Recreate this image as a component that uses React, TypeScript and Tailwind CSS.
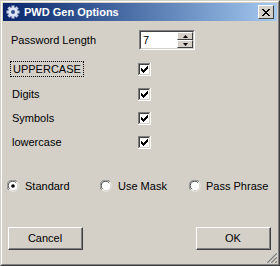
import React from 'react';

const font = { fontFamily: '"Liberation Sans", Arial, sans-serif' };

function Gear() {
  const teeth = [0, 45, 90, 135];
  return (
    <svg width="14" height="14" viewBox="0 0 14 14">
      {teeth.map(a => (
        <rect key={a} x="5.5" y="0.5" width="3" height="13" fill="#c8d0e8" transform={`rotate(${a} 7 7)`} />
      ))}
      <circle cx="7" cy="7" r="4.6" fill="#dfe6f6" />
      <circle cx="7" cy="7" r="2" fill="#3a4f8c" />
    </svg>
  );
}

function CheckBox() {
  return (
    <svg width="13" height="13" viewBox="0 0 13 13" shapeRendering="crispEdges">
      <rect x="0" y="0" width="13" height="13" fill="#ffffff" />
      <rect x="0" y="0" width="12" height="12" fill="#d4d0c8" />
      <rect x="0" y="0" width="12" height="1" fill="#808080" />
      <rect x="0" y="0" width="1" height="12" fill="#808080" />
      <rect x="1" y="1" width="10" height="1" fill="#404040" />
      <rect x="1" y="1" width="1" height="10" fill="#404040" />
      <rect x="2" y="2" width="9" height="9" fill="#ffffff" />
      <rect x="3" y="5" width="1" height="3" fill="#000" />
      <rect x="4" y="6" width="1" height="3" fill="#000" />
      <rect x="5" y="7" width="1" height="3" fill="#000" />
      <rect x="6" y="6" width="1" height="3" fill="#000" />
      <rect x="7" y="5" width="1" height="3" fill="#000" />
      <rect x="8" y="4" width="1" height="3" fill="#000" />
      <rect x="9" y="3" width="1" height="3" fill="#000" />
    </svg>
  );
}

function Radio({ on }: { on?: boolean }) {
  return (
    <svg width="12" height="12" viewBox="0 0 12 12">
      <circle cx="6" cy="6" r="5.5" fill="#ffffff" />
      <path d="M1.6 9.9 A5.5 5.5 0 0 1 9.9 1.6" stroke="#808080" strokeWidth="1" fill="none" />
      <path d="M2.5 8.9 A4.3 4.3 0 0 1 8.9 2.5" stroke="#404040" strokeWidth="1" fill="none" />
      <path d="M2.9 9.4 A4.3 4.3 0 0 0 9.4 2.9" stroke="#d4d0c8" strokeWidth="1" fill="none" />
      {on && <circle cx="6" cy="6" r="1.8" fill="#000" />}
    </svg>
  );
}

function Button({ label }: { label: string }) {
  return (
    <div className="w-[75px] h-[23px] border border-t-white border-l-white border-r-[#404040] border-b-[#404040]">
      <div className="w-full h-full flex items-center justify-center border-r border-b border-[#808080] text-[11px] text-black">
        {label}
      </div>
    </div>
  );
}

function Spinner() {
  return (
    <div className="w-[56px] h-[20px] border border-t-[#808080] border-l-[#808080] border-r-white border-b-white">
      <div className="w-full h-full flex bg-white border border-t-[#404040] border-l-[#404040] border-r-[#d4d0c8] border-b-[#d4d0c8]">
        <div className="flex-1 pl-[2px] text-[11px] leading-[16px] text-black">7</div>
        <div className="w-[16px] flex flex-col">
          {['up', 'down'].map(d => (
            <div key={d} className="flex-1 bg-[#d4d0c8] border border-t-white border-l-white border-r-[#404040] border-b-[#404040] flex items-center justify-center">
              <svg width="5" height="3" viewBox="0 0 5 3">
                {d === 'up' ? <path d="M2.5 0 L5 3 L0 3 Z" fill="#000" /> : <path d="M0 0 L5 0 L2.5 3 Z" fill="#000" />}
              </svg>
            </div>
          ))}
        </div>
      </div>
    </div>
  );
}

function CheckRow({ label, focus, mt }: { label: string; focus?: boolean; mt: string }) {
  return (
    <div className={`flex items-center h-[17px] ${mt}`}>
      <div className="w-[132px] pl-[6px]">
        <span className={focus ? 'px-[1px] outline outline-1 outline-dotted outline-black outline-offset-[1px]' : ''}>
          {label}
        </span>
      </div>
      <CheckBox />
    </div>
  );
}

export default function App() {
  return (
    <div className="w-[280px] h-[266px] bg-[#d4d0c8] border border-t-[#d4d0c8] border-l-[#d4d0c8] border-r-[#404040] border-b-[#404040] text-[11px] text-black" style={font}>
      <div className="relative w-full h-full border border-t-white border-l-white border-r-[#808080] border-b-[#808080] p-[1px] flex flex-col">
        <div className="h-[18px] flex items-center bg-gradient-to-r from-[#0a246a] to-[#a6caf0] pl-[3px] pr-[3px]">
          <Gear />
          <span className="ml-[4px] text-white font-bold text-[11px]">PWD Gen Options</span>
          <div className="ml-auto w-[16px] h-[14px] bg-[#d4d0c8] border border-t-white border-l-white border-r-[#404040] border-b-[#404040] flex items-center justify-center">
            <svg width="8" height="7" viewBox="0 0 8 7" shapeRendering="crispEdges">
              <path d="M0.5 0 L7.5 7 M7.5 0 L0.5 7" stroke="#000" strokeWidth="1.6" />
            </svg>
          </div>
        </div>

        <div className="flex flex-col pl-[3px]">
          <div className="flex items-center h-[20px] mt-[9px]">
            <div className="w-[133px] pl-[5px]">Password Length</div>
            <Spinner />
          </div>
          <CheckRow label="UPPERCASE" focus mt="mt-[11px]" />
          <CheckRow label="Digits" mt="mt-[8px]" />
          <CheckRow label="Symbols" mt="mt-[7px]" />
          <CheckRow label="lowercase" mt="mt-[7px]" />

          <div className="flex items-center h-[14px] mt-[28px] pl-[1px]">
            <Radio on />
            <span className="ml-[6px] w-[75px]">Standard</span>
            <Radio />
            <span className="ml-[6px] w-[71px]">Use Mask</span>
            <Radio />
            <span className="ml-[5px]">Pass Phrase</span>
          </div>

          <div className="flex justify-between mt-[34px] pl-[2px] pr-[6px]">
            <Button label="Cancel" />
            <Button label="OK" />
          </div>
        </div>

        <svg className="absolute right-[1px] bottom-[1px]" width="12" height="12" viewBox="0 0 12 12">
          {[0, 4, 8].map(o => (
            <g key={o}>
              <path d={`M${12 - (11 - o)} 12 L12 ${12 - (11 - o)}`} stroke="#ffffff" strokeWidth="1" />
              <path d={`M${13 - (11 - o)} 12 L12 ${13 - (11 - o)}`} stroke="#808080" strokeWidth="1.5" />
            </g>
          ))}
        </svg>
      </div>
    </div>
  );
}
